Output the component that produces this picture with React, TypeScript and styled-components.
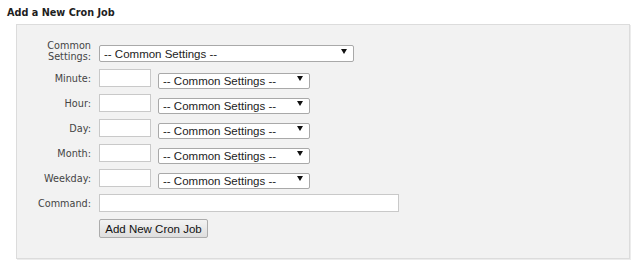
import React from "react";
import styled, { createGlobalStyle } from "styled-components";

const GlobalStyle = createGlobalStyle`
  html, body {
    margin: 0;
    padding: 0;
    background: #ffffff;
  }
  body {
    font-family: "DejaVu Sans", Verdana, sans-serif;
  }
`;

const Page = styled.div`
  width: 640px;
  height: 269px;
  box-sizing: border-box;
  padding-top: 7px;
`;

const Title = styled.h2`
  margin: 0 0 5px 7px;
  font-family: "DejaVu Sans", Verdana, sans-serif;
  font-weight: bold;
  font-size: 9.7px;
  line-height: 12px;
  color: #1e1e1e;
`;

const Panel = styled.div`
  margin-left: 16px;
  width: 614px;
  height: 235px;
  box-sizing: border-box;
  background: #f2f2f2;
  border: 1px solid #dcdcdc;
  box-shadow: 1px 1px 0 #ececec;
  padding: 15px 0 0 0;
`;

const Form = styled.div`
  display: grid;
  grid-template-columns: 74px 1fr;
  column-gap: 8px;
  row-gap: 7px;
  align-items: center;
`;

const Label = styled.label`
  text-align: right;
  font-family: "DejaVu Sans", Verdana, sans-serif;
  font-size: 9.7px;
  line-height: 11px;
  color: #444;
`;

const Controls = styled.div`
  display: flex;
  align-items: center;
  gap: 7px;
`;

const TextInput = styled.input<{ $width: number }>`
  box-sizing: border-box;
  width: ${(p) => p.$width}px;
  height: 18px;
  margin: 0;
  padding: 0 3px;
  background: #fff;
  border: 1px solid #c9c9c9;
  border-radius: 0;
  font-family: "Liberation Sans", Arial, sans-serif;
  font-size: 11.5px;
  outline: none;
`;

const SelectWrap = styled.div<{ $width: number; $height: number }>`
  position: relative;
  width: ${(p) => p.$width}px;
  height: ${(p) => p.$height}px;
`;

const Select = styled.select`
  appearance: none;
  -webkit-appearance: none;
  box-sizing: border-box;
  width: 100%;
  height: 100%;
  margin: 0;
  padding: 0 16px 0 4px;
  background: #fff;
  border: 1px solid #a9a9a9;
  border-radius: 2px;
  font-family: "Liberation Sans", Arial, sans-serif;
  font-size: 11.5px;
  color: #222;
  outline: none;
`;

const Arrow = styled.span`
  position: absolute;
  right: 7px;
  top: 50%;
  margin-top: -2px;
  width: 0;
  height: 0;
  border-left: 3px solid transparent;
  border-right: 3px solid transparent;
  border-top: 5px solid #111;
  pointer-events: none;
`;

const Button = styled.button`
  box-sizing: border-box;
  width: 109px;
  height: 19px;
  margin: 0;
  padding: 0;
  background: linear-gradient(#f3f3f3, #dedede);
  border: 1px solid #acacac;
  border-radius: 2px;
  font-family: "Liberation Sans", Arial, sans-serif;
  font-size: 11.5px;
  color: #111;
  justify-self: start;
`;

const Spacer = styled.span``;

const CommonSelect: React.FC<{ width: number; height: number }> = ({ width, height }) => (
  <SelectWrap $width={width} $height={height}>
    <Select defaultValue="">
      <option value="">-- Common Settings --</option>
    </Select>
    <Arrow />
  </SelectWrap>
);

const fields = ["Minute", "Hour", "Day", "Month", "Weekday"];

export default function App() {
  return (
    <Page>
      <GlobalStyle />
      <Title>Add a New Cron Job</Title>
      <Panel>
        <Form>
          <Label>
            Common
            <br />
            Settings:
          </Label>
          <Controls>
            <CommonSelect width={255} height={17} />
          </Controls>
          {fields.map((f) => (
            <React.Fragment key={f}>
              <Label>{f}:</Label>
              <Controls>
                <TextInput $width={52} type="text" />
                <CommonSelect width={152} height={16} />
              </Controls>
            </React.Fragment>
          ))}
          <Label>Command:</Label>
          <Controls>
            <TextInput $width={300} type="text" />
          </Controls>
          <Spacer />
          <Button type="button">Add New Cron Job</Button>
        </Form>
      </Panel>
    </Page>
  );
}
